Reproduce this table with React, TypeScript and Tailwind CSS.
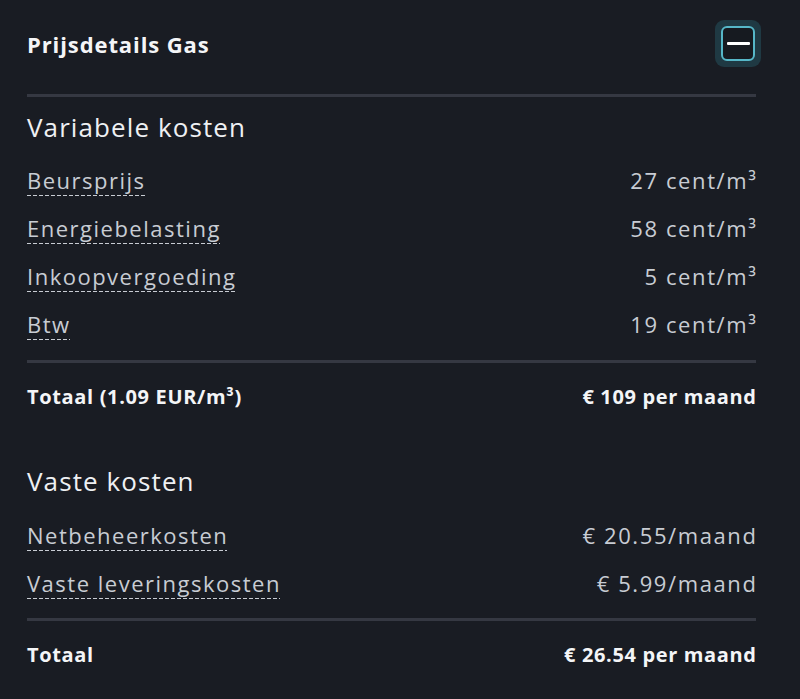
import React from "react";

const font = { fontFamily: '"Open Sans", "Noto Sans", sans-serif' };

function Row({ label, value }: { label: string; value: string }) {
  return (
    <div className="flex h-[48px] items-center justify-between pb-[4px]">
      <span className="relative text-[22px] leading-[28px] tracking-[1.5px] text-[#c8ccd3]">
        {label}
        <span className="absolute left-0 right-[1px] top-[29px] h-px bg-[linear-gradient(to_right,#c8ccd3_65%,transparent_0)] bg-[length:6px_1px] bg-repeat-x" />
      </span>
      <span className="-mr-[1.5px] text-[22px] leading-[28px] tracking-[1.6px] text-[#c8ccd3]">{value}</span>
    </div>
  );
}

export default function App() {
  return (
    <div className="min-h-[699px] w-[800px] bg-[#191c23] pl-[27px] pr-[44px] pt-[20px]" style={font}>
      <div className="flex h-[47px] items-center justify-between">
        <h1 className="text-[22px] font-bold leading-[28px] tracking-[0.9px] text-[#f4f5f7]">Prijsdetails Gas</h1>
        <button className="-mr-[5px] flex h-[47px] w-[46px] items-center justify-center rounded-[9px] bg-[#1f3943]">
          <span className="flex h-[35px] w-[34px] items-center justify-center rounded-[6px] border-2 border-[#56b7c8] bg-[#161a20]">
            <span className="h-[3px] w-[23px] rounded-[1px] bg-white" />
          </span>
        </button>
      </div>
      <div className="mt-[27px] h-[3px] bg-[#353842]" />

      <h2 className="mt-[13px] text-[26px] leading-[34px] tracking-[1.1px] text-[#eef0f3]">Variabele kosten</h2>
      <div className="mt-[14px]">
        <Row label="Beursprijs" value="27 cent/m³" />
        <Row label="Energiebelasting" value="58 cent/m³" />
        <Row label="Inkoopvergoeding" value="5 cent/m³" />
        <Row label="Btw" value="19 cent/m³" />
      </div>
      <div className="mt-[10px] h-[3px] bg-[#353842]" />
      <div className="mt-[20px] flex h-[28px] items-center justify-between text-[20px] font-bold tracking-[0.65px] text-[#f4f5f7]">
        <span>Totaal (1.09 EUR/m³)</span>
        <span className="-mr-[0.65px]">€ 109 per maand</span>
      </div>

      <h2 className="mt-[53px] text-[26px] leading-[34px] tracking-[1.1px] text-[#eef0f3]">Vaste kosten</h2>
      <div className="mt-[15px]">
        <Row label="Netbeheerkosten" value="€ 20.55/maand" />
        <Row label="Vaste leveringskosten" value="€ 5.99/maand" />
      </div>
      <div className="mt-[9px] h-[3px] bg-[#353842]" />
      <div className="mt-[20px] flex h-[28px] items-center justify-between text-[20px] font-bold tracking-[0.65px] text-[#f4f5f7]">
        <span>Totaal</span>
        <span className="-mr-[0.65px]">€ 26.54 per maand</span>
      </div>
    </div>
  );
}
